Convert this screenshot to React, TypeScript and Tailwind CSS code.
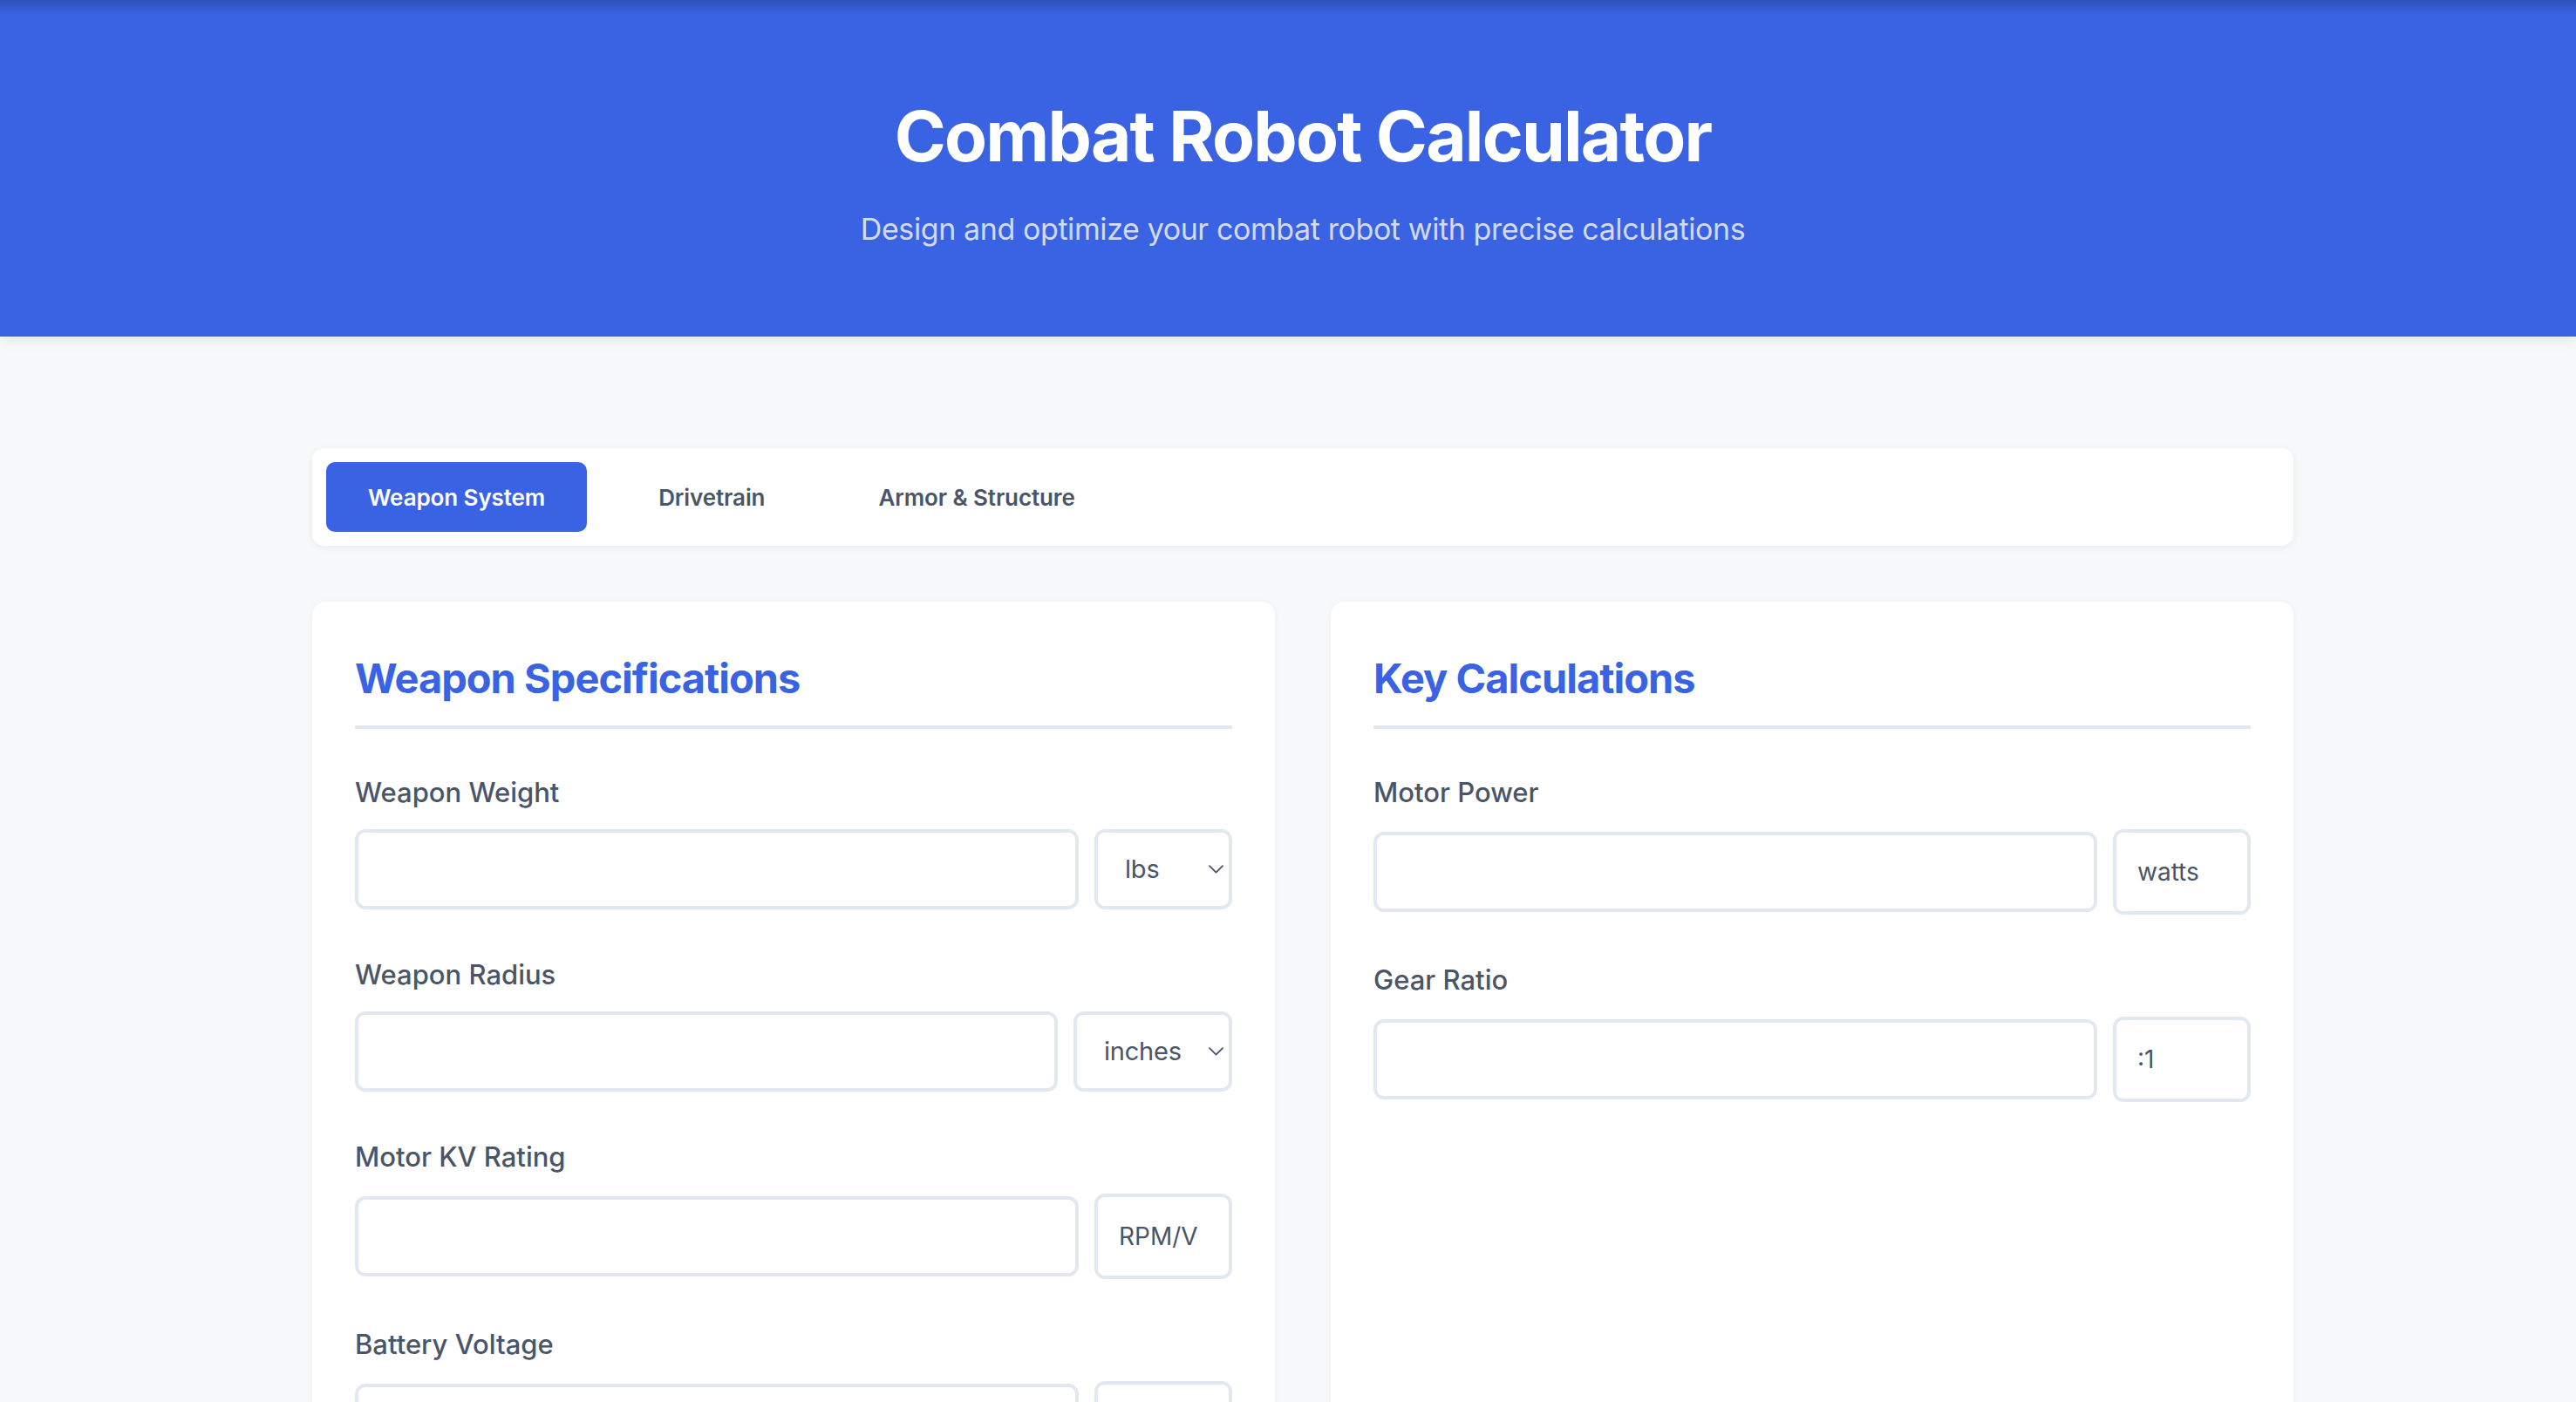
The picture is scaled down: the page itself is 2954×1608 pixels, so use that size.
import { useState } from "react";

type FieldProps = {
  label: string;
  unit?: string;
  options?: string[];
};

const Chevron = () => (
  <svg
    className="pointer-events-none absolute right-[10px] top-1/2 -translate-y-1/2"
    width="17"
    height="10"
    viewBox="0 0 17 10"
    fill="none"
  >
    <path d="M1 1.2l7.5 7.4L16 1.2" stroke="#4a5568" strokeWidth="1.8" strokeLinecap="round" strokeLinejoin="round" />
  </svg>
);

const Field = ({ label, unit, options }: FieldProps) => {
  const [value, setValue] = useState("");
  return (
    <div className="mb-[52px]">
      <label className="mb-[20px] block text-[31px] font-medium leading-[45px] text-[#4a5568]">{label}</label>
      <div className="flex items-center gap-[18px]">
        <input
          value={value}
          onChange={(e) => setValue(e.target.value)}
          className="h-[92px] min-w-0 flex-1 rounded-[12px] border-4 border-[#e2e8f0] bg-white px-[24px] text-[30px] text-[#2d3748] outline-none"
        />
        {options ? (
          <div className="relative shrink-0">
            <select className="h-[92px] min-w-[158px] appearance-none rounded-[12px] border-4 border-[#e2e8f0] bg-white pl-[31px] pr-[54px] text-[29px] tracking-[-0.2px] text-[#4a5568] outline-none">
              {options.map((o) => (
                <option key={o}>{o}</option>
              ))}
            </select>
            <Chevron />
          </div>
        ) : (
          <span className="min-w-[158px] shrink-0 rounded-[12px] border-4 border-[#e2e8f0] bg-white p-[24px] text-[28px] leading-[42px] text-[#4a5568]">
            {unit}
          </span>
        )}
      </div>
    </div>
  );
};

const Card = ({ title, children }: { title: string; children: React.ReactNode }) => (
  <div className="rounded-[16px] bg-white px-[49px] pt-[59px] pb-[20px] shadow-[0_2px_10px_rgba(0,0,0,0.05)]">
    <h2 className="mb-[50px] border-b-4 border-[#e2e8f0] pb-[25px] text-[47px] font-bold leading-[58px] tracking-[-1px] text-[#3a63e4]">
      {title}
    </h2>
    {children}
  </div>
);

const tabs = ["Weapon System", "Drivetrain", "Armor & Structure"];

export default function App() {
  const [active, setActive] = useState(0);
  return (
    <div className="min-h-screen bg-[#f7f8fa] font-[Inter,'Liberation_Sans',sans-serif]">
      <header className="relative bg-[#3a63e4] pl-[34px] pt-[108px] pb-[98px] text-center shadow-[0_4px_14px_rgba(0,0,0,0.08)]">
        <div className="pointer-events-none absolute inset-x-0 top-0 h-[16px] bg-gradient-to-b from-[rgba(20,30,80,0.28)] to-transparent" />
        <h1 className="text-[80px] font-bold leading-[96px] tracking-[-1.8px] text-white">Combat Robot Calculator</h1>
        <p className="mt-[33px] text-[34px] leading-[51px] tracking-[-0.4px] text-[#d3daee]">
          Design and optimize your combat robot with precise calculations
        </p>
      </header>

      <main className="pl-[34px] pt-[128px]">
        <div className="mx-auto w-[2272px]">
          <nav className="flex gap-[34px] rounded-[14px] bg-white p-[16px] shadow-[0_2px_10px_rgba(0,0,0,0.06)]">
            {tabs.map((t, i) => (
              <button
                key={t}
                onClick={() => setActive(i)}
                className={
                  i === active
                    ? "h-[80px] rounded-[10px] bg-[#3a63e4] px-[48px] text-[26px] font-semibold tracking-[-0.1px] text-white"
                    : "h-[80px] rounded-[10px] px-[48px] text-[26px] font-semibold tracking-[-0.1px] text-[#4a5568]"
                }
              >
                {t}
              </button>
            ))}
          </nav>

          <div className="mt-[64px] grid grid-cols-2 gap-[64px]">
            <Card title="Weapon Specifications">
              <Field label="Weapon Weight" options={["lbs", "kg"]} />
              <Field label="Weapon Radius" options={["inches", "cm", "mm"]} />
              <Field label="Motor KV Rating" unit="RPM/V" />
              <Field label="Battery Voltage" unit="volts" />
              <Field label="Weapon Moment of Inertia" unit="kg·m²" />
            </Card>
            <Card title="Key Calculations">
              <Field label="Motor Power" unit="watts" />
              <Field label="Gear Ratio" unit=":1" />
            </Card>
          </div>
        </div>
      </main>
    </div>
  );
}
